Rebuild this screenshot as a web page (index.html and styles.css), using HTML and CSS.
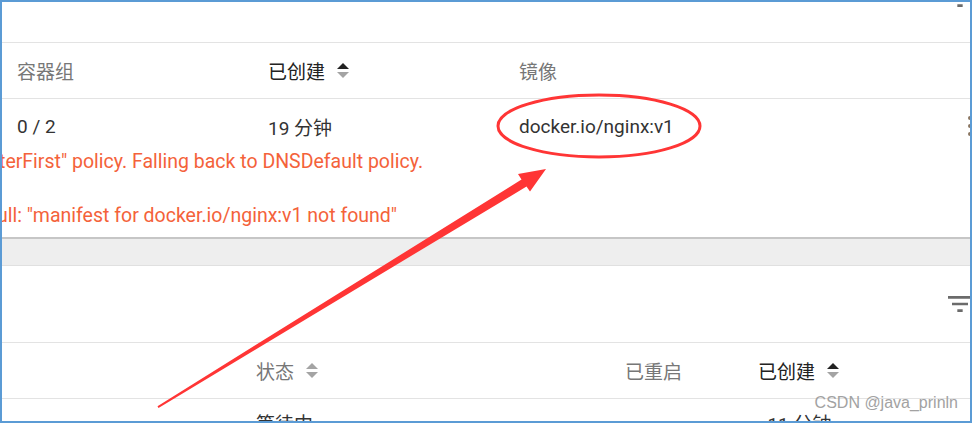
FILE: index.html
```html
<!DOCTYPE html>
<html>
	<head>
		<meta charset="UTF-8">
		<title></title>
		<link rel="stylesheet" href="styles.css">
	</head>
	<body>
		<div class="frame">
			<div class="card first">
				<div class="toolbar">
					<svg class="filter" width="32" height="32" viewBox="0 0 24 24"><path d="M3 6h18v2H3zM6 11h12v2H6zM10 16h4v2h-4z"/></svg>
				</div>
				<div class="grid g1 head">
					<div class="th">容器组</div>
					<div class="th on">已创建
						<svg class="sort" width="14" height="18" viewBox="0 0 14 18"><path class="up" d="M1 7L7 1l6 6z"/><path class="down" d="M1 10l6 6 6-6z"/></svg>
					</div>
					<div class="th">镜像</div>
				</div>
				<div class="grid g1 row">
					<div class="td">0 / 2</div>
					<div class="td">19 分钟</div>
					<div class="td">docker.io/nginx:v1</div>
					<div class="more"><i></i><i></i><i></i></div>
				</div>
				<div class="events">
					<p class="err one">terFirst" policy. Falling back to DNSDefault policy.</p>
					<p class="err two">ull: "manifest for docker.io/nginx:v1 not found"</p>
				</div>
			</div>
			<div class="band"></div>
			<div class="card">
				<div class="toolbar">
					<svg class="filter" width="32" height="32" viewBox="0 0 24 24"><path d="M3 6h18v2H3zM6 11h12v2H6zM10 16h4v2h-4z"/></svg>
				</div>
				<div class="grid g2 head">
					<div class="th"></div>
					<div class="th">状态
						<svg class="sort" width="14" height="18" viewBox="0 0 14 18"><path class="down" d="M1 7L7 1l6 6z"/><path class="down" d="M1 10l6 6 6-6z"/></svg>
					</div>
					<div class="th">已重启</div>
					<div class="th on">已创建
						<svg class="sort" width="14" height="18" viewBox="0 0 14 18"><path class="up" d="M1 7L7 1l6 6z"/><path class="down" d="M1 10l6 6 6-6z"/></svg>
					</div>
				</div>
				<div class="grid g2 row last">
					<div class="td"></div>
					<div class="td">等待中</div>
					<div class="td"></div>
					<div class="td">&nbsp;&nbsp;11 分钟</div>
				</div>
			</div>
			<!-- 标注：红圈和箭头 -->
			<svg class="mark" width="972" height="423" viewBox="0 0 972 423">
				<ellipse cx="599" cy="126" rx="101" ry="31" fill="none" stroke="#ff3535" stroke-width="3"/>
				<polygon fill="#ff3535" points="157.5,406.2 521.5,179.5 518,174 546,169 530,191.5 526.5,186.5 158.5,407.9"/>
			</svg>
			<div class="watermark">CSDN @java_prinln</div>
		</div>
	</body>
</html>
```

FILE: styles.css
```css
*{
	margin:0px;
	padding:0px;
}
body{
	background:#fff;
	font-family:Roboto,"Noto Sans CJK SC",sans-serif;
}
.frame{
	width:972px;
	height:423px;
	box-sizing:border-box;
	border:2px solid #5b9bd5;
	position:relative;
	overflow:hidden;
	background:#fff;
}
.first{
	margin-top:-36px;
}
.first .filter{
	margin-top:-10px;
}
.toolbar{
	height:76px;
	border-bottom:1px solid #e3e3e3;
	display:flex;
	align-items:center;
	justify-content:flex-end;
}
.filter{
	fill:#6b6b6b;
	margin-right:-6px;
}
.grid{
	display:grid;
	align-items:center;
	font-size:19px;
}
.g1{
	grid-template-columns:251px 251px 1fr 4px;
	padding-left:15px;
	margin-right:-2px;
}
.g2{
	grid-template-columns:254px 369px 133px 1fr;
}
.head{
	height:55px;
	border-bottom:1px solid #e3e3e3;
}
.th{
	color:#777;
	display:flex;
	align-items:center;
	gap:11px;
}
.th.on{
	color:#222;
}
.sort .up{fill:#222;}
.sort .down{fill:#a4a4a4;}
.row{
	height:52px;
	color:#333;
}
.row .td{
	padding-top:2px;
}
.last{
	height:auto;
	align-items:start;
	padding-top:13px;
	line-height:22px;
}
.more{
	display:flex;
	flex-direction:column;
	gap:4px;
	padding-top:2px;
}
.more i{
	display:block;
	width:4px;
	height:4px;
	border-radius:50%;
	background:#8a7560;
}
.events{
	padding-bottom:10px;
	font-size:19.5px;
	line-height:22px;
	color:#f4623a;
}
.err{
	white-space:nowrap;
}
.one{
	margin-left:-3px;
}
.two{
	margin-top:32px;
	margin-left:-5px;
}
.band{
	height:26px;
	background:#eee;
	border-top:2px solid #c6c6c6;
	border-bottom:1px solid #e0e0e0;
}
.mark{
	position:absolute;
	left:-2px;
	top:-2px;
	pointer-events:none;
}
.watermark{
	position:absolute;
	right:12px;
	top:392px;
	font-family:"Liberation Sans",Arial,sans-serif;
	font-size:16px;
	color:#a2a2a2;
}
```
